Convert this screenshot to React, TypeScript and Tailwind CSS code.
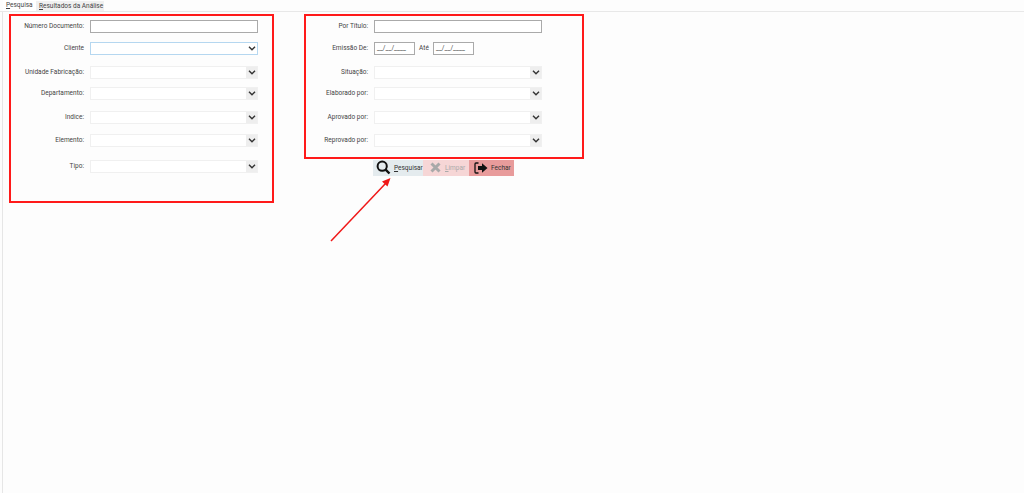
import React from "react";

function Chevron() {
  return (
    <svg width="8" height="5" viewBox="0 0 8 5" fill="none">
      <path d="M1 0.8 L4 3.8 L7 0.8" stroke="#333" strokeWidth="1.4" />
    </svg>
  );
}

function Label({ text, w }: { text: string; w: string }) {
  return <span className={`${w} shrink-0 whitespace-nowrap pr-[6px] text-right text-[6.5px] leading-[14px] text-[#444]`}>{text}</span>;
}

function Select({ focus }: { focus?: boolean }) {
  return (
    <div className={`flex h-[13px] w-[168px] items-stretch border bg-white ${focus ? "border-[#b5d7f0]" : "border-[#f0f0f0]"}`}>
      <div className="flex-1" />
      <div className={`flex w-[11px] items-center justify-center ${focus ? "" : "bg-[#eeeeee]"}`}>
        <Chevron />
      </div>
    </div>
  );
}

function TextBox({ w }: { w: string }) {
  return <div className={`h-[13px] ${w} border border-[#aaaaaa] bg-white`} />;
}

function DateBox() {
  return (
    <div className="flex h-[13px] w-[41px] items-center overflow-hidden whitespace-nowrap border border-[#aaaaaa] bg-white pl-[2px] text-[6.5px] leading-[11px] text-[#444]">
      __/__/____
    </div>
  );
}

export default function App() {
  return (
    <div className="relative h-[493px] w-full overflow-hidden bg-[#fdfdfd] font-['Roboto',sans-serif]">
      <div className="flex h-[12px] items-end border-b border-[#e8e8e8] pl-[3px] text-[6.5px] leading-[11px] text-[#444]">
        <div className="h-[11px] w-[33px] whitespace-nowrap bg-white pl-[3px]"><u>P</u>esquisa</div>
        <div className="h-[10px] w-[68px] whitespace-nowrap bg-[#f0f0f0] pl-[3px] leading-[10px]"><u>R</u>esultados da Análise</div>
      </div>
      <div className="ml-[2px] flex h-[481px] items-start border-l-[1px] border-[#e6e6e6] pl-[6px] pt-[1.5px]">
        <div className="h-[189px] w-[265px] shrink-0 border-2 border-[#ff1a1a] pt-[4px]">
          <div className="flex h-[13px] items-center"><Label w="w-[79px]" text="Número Documento:" /><TextBox w="w-[168px]" /></div>
          <div className="mt-[9px] flex h-[13px] items-center"><Label w="w-[79px]" text="Cliente" /><Select focus /></div>
          <div className="mt-[11px] flex h-[13px] items-center"><Label w="w-[79px]" text="Unidade Fabricação:" /><Select /></div>
          <div className="mt-[8px] flex h-[13px] items-center"><Label w="w-[79px]" text="Departamento:" /><Select /></div>
          <div className="mt-[11px] flex h-[13px] items-center"><Label w="w-[79px]" text="Indice:" /><Select /></div>
          <div className="mt-[10px] flex h-[13px] items-center"><Label w="w-[79px]" text="Elemento:" /><Select /></div>
          <div className="mt-[13px] flex h-[13px] items-center"><Label w="w-[79px]" text="Tipo:" /><Select /></div>
        </div>
        <div className="ml-[30px] shrink-0">
          <div className="h-[145px] w-[280px] border-2 border-[#ff1a1a] pt-[4px]">
            <div className="flex h-[13px] items-center"><Label w="w-[68px]" text="Por Título:" /><TextBox w="w-[168px]" /></div>
            <div className="mt-[9px] flex h-[13px] items-center">
              <Label w="w-[68px]" text="Emissão De:" />
              <DateBox />
              <span className="w-[18px] text-center text-[6.5px] leading-[14px] text-[#444]">Até</span>
              <DateBox />
            </div>
            <div className="mt-[11px] flex h-[13px] items-center"><Label w="w-[68px]" text="Situação:" /><Select /></div>
            <div className="mt-[8px] flex h-[13px] items-center"><Label w="w-[68px]" text="Elaborado por:" /><Select /></div>
            <div className="mt-[11px] flex h-[13px] items-center"><Label w="w-[68px]" text="Aprovado por:" /><Select /></div>
            <div className="mt-[10px] flex h-[13px] items-center"><Label w="w-[68px]" text="Reprovado por:" /><Select /></div>
          </div>
          <div className="ml-[69px] mt-[1px] flex h-[16px] w-[141px] whitespace-nowrap text-[6.5px] leading-[16px]">
            <div className="flex w-[50px] items-center bg-[#e4ebee] pl-[3px] text-[#333]">
              <svg width="15" height="15" viewBox="0 0 15 15" fill="none" className="shrink-0">
                <circle cx="6.2" cy="6.2" r="4.6" stroke="#111" strokeWidth="2" />
                <path d="M9.6 9.6 L13.5 13.5" stroke="#111" strokeWidth="2.4" />
              </svg>
              <span className="ml-[3px]"><u>P</u>esquisar</span>
            </div>
            <div className="flex w-[46px] items-center bg-[#f6d6d6] pl-[7px] text-[#aaa]">
              <svg width="11" height="11" viewBox="0 0 11 11" fill="none" className="shrink-0">
                <path d="M1.5 1.5 L9.5 9.5 M9.5 1.5 L1.5 9.5" stroke="#a9a9a9" strokeWidth="3" />
              </svg>
              <span className="ml-[4px]"><u>L</u>impar</span>
            </div>
            <div className="flex w-[45px] items-center bg-[#e89b9b] pl-[5px] text-[#333]">
              <svg width="14" height="12" viewBox="0 0 14 12" fill="none" className="shrink-0">
                <path d="M4.5 1 H2 Q1 1 1 2 V10 Q1 11 2 11 H4.5" stroke="#111" strokeWidth="1.3" />
                <path d="M4 4 H8 V1.2 L13.5 6 L8 10.8 V8 H4 Z" fill="#111" />
              </svg>
              <span className="ml-[3px]">Fechar</span>
            </div>
          </div>
        </div>
      </div>
      <svg className="absolute left-[325px] top-[172px]" width="75" height="75" viewBox="0 0 75 75" fill="none">
        <path d="M6 69 L61 11" stroke="#f01818" strokeWidth="1.5" />
        <path d="M65.5 6 L62.5 14.5 L57 9.5 Z" fill="#f01818" />
      </svg>
    </div>
  );
}
